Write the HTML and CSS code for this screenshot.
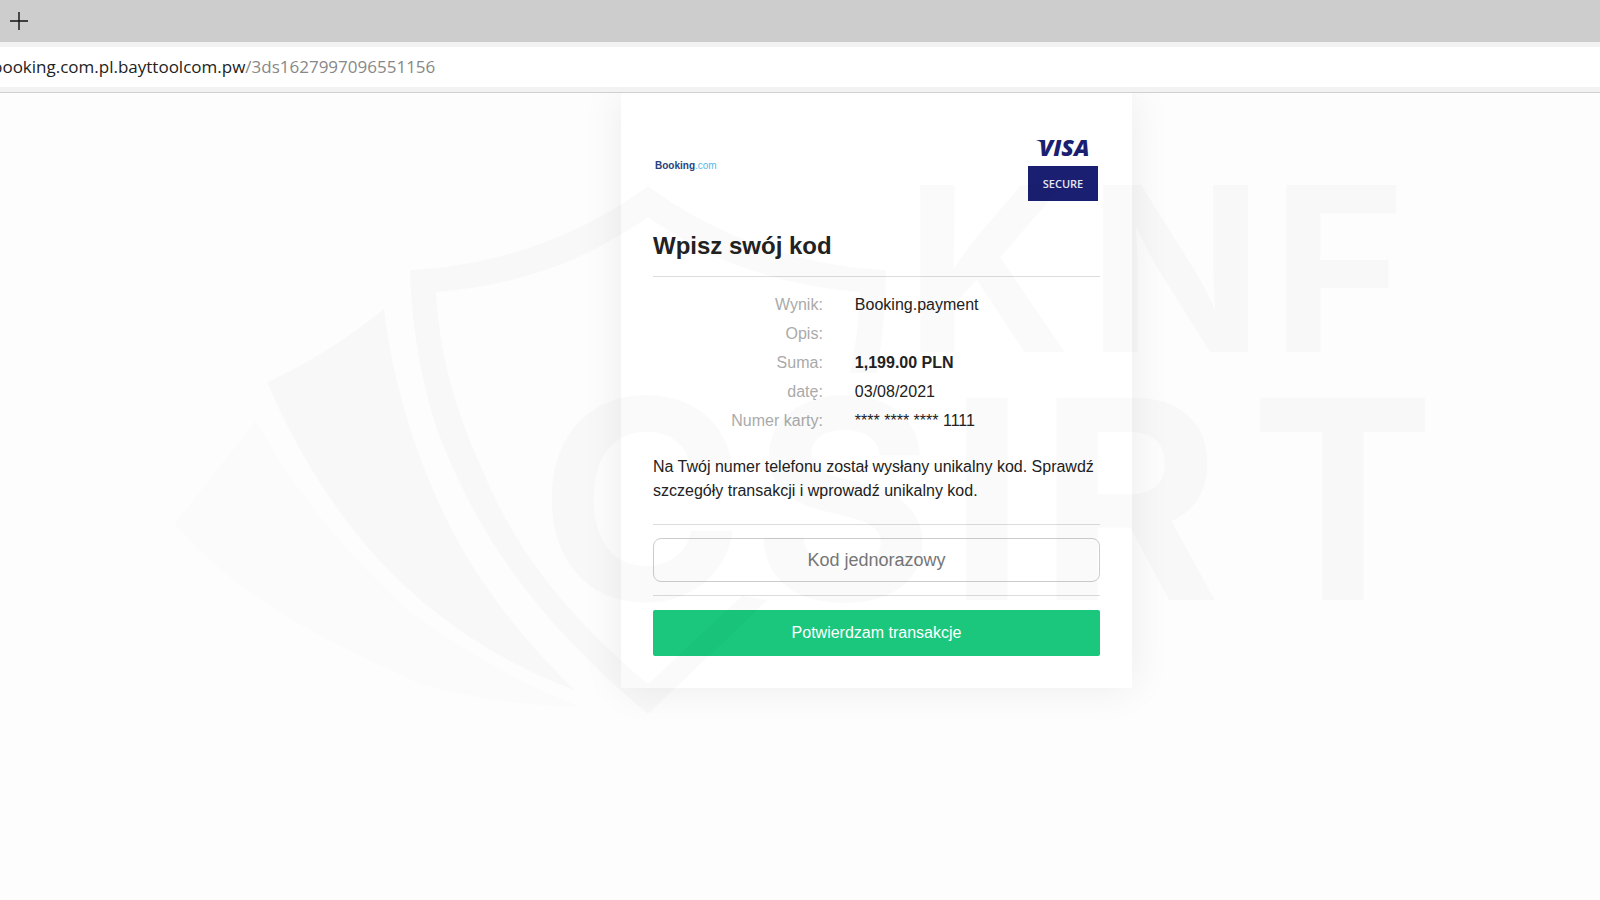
FILE: index.html
```html
<!doctype html>
<html lang="pl">
  <head>
    <meta charset="utf-8">
    <title>Wpisz swój kod</title>
    <link rel="stylesheet" href="styles.css">
  </head>
  <body>
    <div class="tab-bar">
      <button class="new-tab" type="button" aria-label="Nowa karta">
        <svg width="20" height="20" viewBox="0 0 20 20"><path d="M10 1v18M1 10h18" fill="none" stroke="#111" stroke-width="1.4"/></svg>
      </button>
    </div>
    <div class="address-bar">
      <div class="address"><span class="host">booking.com.pl.bayttoolcom.pw</span><span class="path">/3ds1627997096551156</span></div>
    </div>

    <main class="page">
      <div class="card">
        <div class="logos">
          <div class="booking-logo">Booking<span>.com</span></div>
          <div class="visa-logo">
            <svg width="60" height="20" viewBox="0 0 60 20">
              <path d="M3 2h7l2 7C10 5 7 3 3 2z" fill="#1a1f71"/>
              <text class="visa-word" x="6" y="18">VISA</text>
            </svg>
            <div class="secure">SECURE</div>
          </div>
        </div>

        <h1>Wpisz swój kod</h1>

        <table class="details">
          <tr><th scope="row">Wynik:</th><td>Booking.payment</td></tr>
          <tr><th scope="row">Opis:</th><td></td></tr>
          <tr><th scope="row">Suma:</th><td><strong>1,199.00 PLN</strong></td></tr>
          <tr><th scope="row">datę:</th><td>03/08/2021</td></tr>
          <tr><th scope="row">Numer karty:</th><td>**** **** **** 1111</td></tr>
        </table>

        <p>Na Twój numer telefonu został wysłany unikalny kod. Sprawdź szczegóły transakcji i wprowadź unikalny kod.</p>

        <div class="code-row">
          <input class="code" type="text" placeholder="Kod jednorazowy" aria-label="Kod jednorazowy">
        </div>
        <button class="confirm" type="button">Potwierdzam transakcje</button>
      </div>
    </main>

    <!-- CSIRT KNF watermark -->
    <svg class="watermark" viewBox="0 0 1600 900" aria-hidden="true">
      <path class="faint" d="M256 420L174 524C241 600 319 638 420 684C470 698 530 707 583 707C530 688 470 655 407 609C350 555 296 495 256 420z"/>
      <path d="M384 309Q325 356 267 382C299 460 353 540 407 588C460 637 520 670 576 691C530 647 485 592 454 534C420 467 395 395 384 309z"/>
      <path d="M648 186C580 236 500 265 410 270C411 330 425 405 446 452C490 560 560 640 648 714L768 600L742 596L648 684C560 610 510 540 481 466C458 415 440 360 436 292C515 286 585 262 648 217C711 262 781 286 860 292Q858 335 850 373L877 373Q886 320 886 270C796 265 716 236 648 186z"/>
      <text class="knf" x="905 1088 1271" y="352">KNF</text>
      <text class="csirt" x="539 752 948 1038 1250" y="600">CSIRT</text>
    </svg>
  </body>
</html>
```
FILE: styles.css
```css
* {
  box-sizing: border-box;
}
body {
  margin: 0;
  min-height: 100vh;
  position: relative;
  overflow-x: hidden;
  background-color: #fdfdfd;
  color: #222;
  font-family: "Liberation Sans", Arial, sans-serif;
  font-size: 16px;
}
.tab-bar {
  height: 42px;
  display: flex;
  align-items: center;
  padding-left: 9px;
  background-color: #cdcdcd;
}
.new-tab {
  display: flex;
  padding: 0;
  border: none;
  background: none;
  cursor: pointer;
}
.address-bar {
  padding: 5px 0;
  background-color: #f2f2f2;
  border-bottom: 1px solid #d0d0d0;
}
.address {
  height: 40px;
  line-height: 40px;
  margin-left: -8px;
  background-color: #fff;
  font-family: "Open Sans", "Noto Sans", sans-serif;
  font-size: 17px;
  white-space: nowrap;
}
.path {
  color: #888;
}
.page {
  display: flex;
  justify-content: center;
  padding-left: 153px;
}
.card {
  width: 100%;
  max-width: 511px;
  padding: 45px 32px 32px;
  background-color: #fff;
  box-shadow: 0 0 40px rgba(0, 0, 0, 0.07);
  clip-path: inset(0 -60px -60px);
}
.logos {
  display: flex;
  justify-content: space-between;
  align-items: center;
}
.booking-logo {
  padding: 0 0 8px 2px;
  color: #26427f;
  font-size: 10px;
  font-weight: bold;
}
.booking-logo span {
  color: #57b6ec;
  font-weight: normal;
}
.visa-logo {
  display: flex;
  flex-direction: column;
  align-items: center;
  gap: 8px;
  margin-right: 2px;
}
.visa-logo svg {
  display: block;
  overflow: visible;
}
.visa-word {
  font: italic 800 23px "Open Sans", sans-serif;
  fill: #1a1f71;
}
.secure {
  width: 70px;
  line-height: 35px;
  background-color: #1a1f71;
  color: #e6e7f5;
  font-family: "Open Sans", sans-serif;
  font-size: 11px;
  font-weight: 600;
  text-align: center;
}
h1 {
  margin: 30px 0 0;
  padding-bottom: 16px;
  border-bottom: 1px solid #dcdcdc;
  font-size: 24px;
  line-height: 29px;
}
.details {
  width: 100%;
  margin-top: 13px;
  border-collapse: collapse;
  line-height: 29px;
}
.details th,
.details td {
  height: 29px;
  padding: 0;
}
.details th {
  width: 38%;
  color: #aaa;
  font-weight: normal;
  text-align: right;
}
.details td {
  padding-left: 32px;
}
p {
  margin: 20px 0 21px;
  line-height: 24px;
}
.code-row {
  padding: 13px 0;
  border-top: 1px solid #dcdcdc;
  border-bottom: 1px solid #dcdcdc;
}
.code {
  display: block;
  width: 100%;
  height: 44px;
  border: 1px solid #ccc;
  border-radius: 8px;
  background-color: #fff;
  font-family: inherit;
  font-size: 18px;
  text-align: center;
}
.code::placeholder {
  color: #777;
}
.confirm {
  width: 100%;
  height: 46px;
  margin-top: 14px;
  border: none;
  border-radius: 2px;
  background-color: #1ac77c;
  color: #fff;
  font-family: inherit;
  font-size: 16px;
  cursor: pointer;
}
.watermark {
  position: absolute;
  top: 0;
  left: 0;
  width: 100%;
  pointer-events: none;
  fill: rgba(0, 0, 0, 0.02);
}
.faint {
  fill: rgba(0, 0, 0, 0.008);
}
.knf,
.csirt {
  font-family: "Inter", sans-serif;
  font-weight: 700;
}
.knf {
  font-size: 230px;
}
.csirt {
  font-size: 278px;
}
```
